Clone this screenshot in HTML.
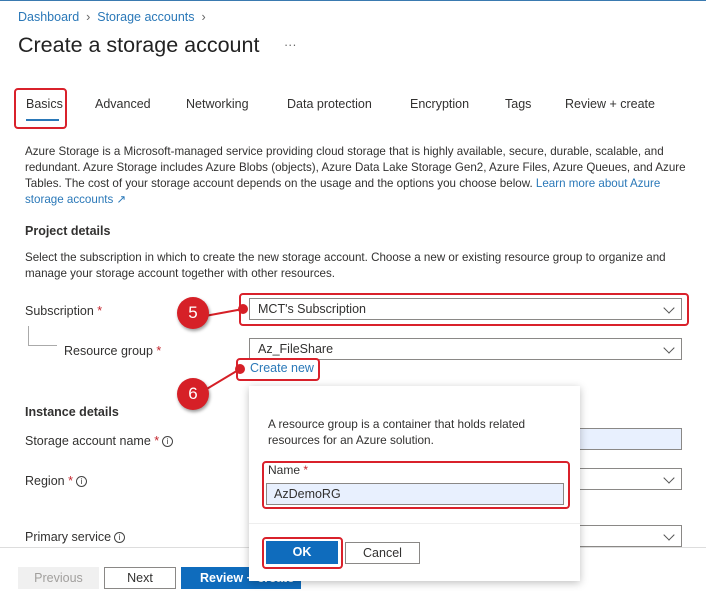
<!DOCTYPE html>
<html><head><meta charset="utf-8"><style>
*{margin:0;padding:0;box-sizing:border-box}
body{width:706px;height:591px;background:#fff;position:relative;overflow:hidden;font-family:"Liberation Sans",sans-serif;font-size:12.5px;color:#323130}
.a{position:absolute;white-space:nowrap}
.blue{color:#2a78b8}
.req{color:#c4262e}
.dd{position:absolute;border:1px solid #8a8886;background:#fff;height:22px;padding:3px 8px;font-size:12.5px}
.dd:after{content:"";position:absolute;right:8px;top:5px;width:7px;height:7px;border-right:1px solid #555;border-bottom:1px solid #555;transform:rotate(45deg)}
.red{position:absolute;border:2px solid #d9212b;border-radius:4px}
.circ{position:absolute;width:32px;height:32px;border-radius:50%;background:#d62027;color:#fff;font-size:17px;text-align:center;line-height:32px;box-shadow:1px 2px 3px rgba(0,0,0,.4)}
.info{display:inline-block;width:11px;height:11px;border:1px solid #444;border-radius:50%;font-size:8px;line-height:9px;text-align:center;vertical-align:middle;margin-left:3px}
</style></head><body>
<div class="a" style="left:0;top:0;width:706px;height:1px;background:#3a7ab0"></div>
<div class="a blue" style="left:18px;top:10px;font-size:12.5px">Dashboard &nbsp;<span style="color:#666">›</span>&nbsp; Storage accounts &nbsp;<span style="color:#666">›</span></div>
<div class="a" style="left:18px;top:33px;font-size:21.5px;color:#222">Create a storage account</div>
<div class="a" style="left:284px;top:38px;color:#666">···</div>

<div class="a" style="left:26px;top:97px">Basics</div>
<div class="a" style="left:26px;top:119px;width:33px;height:2px;background:#2a78b8"></div>
<div class="red" style="left:14px;top:88px;width:53px;height:41px"></div>
<div class="a" style="left:95px;top:97px">Advanced</div>
<div class="a" style="left:186px;top:97px">Networking</div>
<div class="a" style="left:287px;top:97px">Data protection</div>
<div class="a" style="left:410px;top:97px">Encryption</div>
<div class="a" style="left:505px;top:97px">Tags</div>
<div class="a" style="left:565px;top:97px">Review + create</div>

<div class="a" style="left:25px;top:144px;line-height:16px;font-size:11.6px">Azure Storage is a Microsoft-managed service providing cloud storage that is highly available, secure, durable, scalable, and<br>redundant. Azure Storage includes Azure Blobs (objects), Azure Data Lake Storage Gen2, Azure Files, Azure Queues, and Azure<br>Tables. The cost of your storage account depends on the usage and the options you choose below. <span class="blue">Learn more about Azure</span><br><span class="blue">storage accounts ↗</span></div>

<div class="a" style="left:25px;top:224px;font-weight:bold;font-size:12.5px">Project details</div>
<div class="a" style="left:25px;top:250px;line-height:16px;font-size:11.6px">Select the subscription in which to create the new storage account. Choose a new or existing resource group to organize and<br>manage your storage account together with other resources.</div>

<div class="a" style="left:25px;top:304px">Subscription <span class="req">*</span></div>
<div class="a" style="left:28px;top:326px;width:1px;height:20px;background:#aaa"></div>
<div class="a" style="left:28px;top:345px;width:29px;height:1px;background:#aaa"></div>
<div class="a" style="left:64px;top:344px">Resource group <span class="req">*</span></div>

<div class="dd" style="left:249px;top:298px;width:433px">MCT's Subscription</div>
<div class="red" style="left:239px;top:293px;width:450px;height:33px"></div>
<div class="dd" style="left:249px;top:338px;width:433px">Az_FileShare</div>
<div class="a blue" style="left:250px;top:361px">Create new</div>
<div class="red" style="left:236px;top:358px;width:84px;height:23px"></div>

<svg class="a" style="left:0;top:0" width="706" height="591"><line x1="205" y1="316" x2="243" y2="309" stroke="#d62027" stroke-width="2"/><circle cx="243" cy="309" r="5" fill="#d62027"/><line x1="205" y1="390" x2="240" y2="369" stroke="#d62027" stroke-width="2"/><circle cx="240" cy="369" r="5" fill="#d62027"/></svg>
<div class="circ" style="left:177px;top:297px">5</div>
<div class="circ" style="left:177px;top:378px">6</div>

<div class="a" style="left:25px;top:405px;font-weight:bold;font-size:12.5px">Instance details</div>
<div class="a" style="left:25px;top:434px">Storage account name <span class="req">*</span><span class="info">i</span></div>
<div class="a" style="left:25px;top:474px">Region <span class="req">*</span><span class="info">i</span></div>
<div class="a" style="left:25px;top:530px">Primary service<span class="info">i</span></div>
<div class="a" style="left:575px;top:428px;width:107px;height:22px;border:1px solid #8a8886;background:#e8f0fe"></div>
<div class="dd" style="left:575px;top:468px;width:107px"></div>
<div class="dd" style="left:575px;top:525px;width:107px"></div>
<div class="a" style="left:0;top:547px;width:706px;height:1px;background:#ddd"></div>

<div class="a" style="left:18px;top:567px;width:81px;height:22px;background:#f0f0f0;color:#a19f9d;text-align:center;line-height:22px">Previous</div>
<div class="a" style="left:104px;top:567px;width:72px;height:22px;border:1px solid #8a8886;text-align:center;line-height:20px">Next</div>
<div class="a" style="left:181px;top:567px;width:120px;height:22px;background:#0f6cbd;color:#fff;font-weight:bold;padding-left:19px;line-height:22px">Review + create</div>

<div class="a" style="left:249px;top:386px;width:331px;height:195px;background:#fff;box-shadow:0 2px 8px rgba(0,0,0,.25)"></div>
<div class="a" style="left:268px;top:416px;line-height:16px;font-size:11.8px">A resource group is a container that holds related<br>resources for an Azure solution.</div>
<div class="a" style="left:268px;top:463px;font-size:12px">Name <span class="req">*</span></div>
<div class="a" style="left:266px;top:483px;width:298px;height:22px;border:1px solid #8a8886;background:#e8f0fe;padding:3px 7px;font-size:12.5px">AzDemoRG</div>
<div class="red" style="left:262px;top:461px;width:308px;height:48px"></div>
<div class="a" style="left:249px;top:523px;width:331px;height:1px;background:#eee"></div>
<div class="a" style="left:266px;top:541px;width:72px;height:23px;background:#0f6cbd;color:#fff;font-weight:bold;text-align:center;line-height:23px">OK</div>
<div class="red" style="left:262px;top:537px;width:81px;height:32px"></div>
<div class="a" style="left:345px;top:542px;width:75px;height:22px;border:1px solid #8a8886;text-align:center;line-height:20px">Cancel</div>
</body></html>
